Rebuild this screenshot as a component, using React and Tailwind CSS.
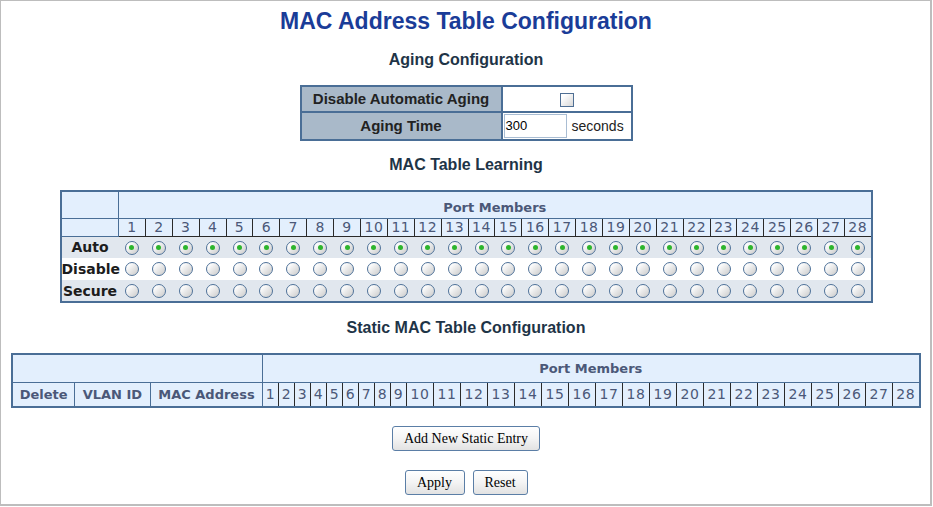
import React from 'react';

const ports = Array.from({ length: 28 }, (_, i) => i + 1);
const modes = [
  { label: 'Auto', bg: 'bg-[#e1e7ee]', checked: true },
  { label: 'Disable', bg: 'bg-white', checked: false },
  { label: 'Secure', bg: 'bg-[#e1e7ee]', checked: false },
];

function Radio({ checked }) {
  return (
    <span className="inline-flex h-[14px] w-[14px] items-center justify-center rounded-full border border-[#4f7299] bg-[linear-gradient(135deg,#ffffff_15%,#d0d0d0_90%)] align-middle">
      {checked ? <span className="h-[5px] w-[5px] rounded-full bg-[#2db52d]" /> : null}
    </span>
  );
}

function Button({ children, className = '' }) {
  return (
    <button
      type="button"
      className={`h-[25px] rounded-[3px] border border-[#5b7ea6] bg-[linear-gradient(180deg,#ffffff_0%,#f4f4f4_50%,#e2e2e2_100%)] font-['Liberation_Serif',serif] text-[14px] leading-none text-black ${className}`}
    >
      {children}
    </button>
  );
}

function SectionTitle({ children, className = '' }) {
  return (
    <h2 className={`h-[20px] text-center font-['Liberation_Sans',Arial,sans-serif] text-[16px] font-bold leading-[20px] text-[#1e3447] ${className}`}>
      {children}
    </h2>
  );
}

export default function App() {
  return (
    <div className="h-[506px] w-[932px] overflow-hidden border-l border-t border-r-2 border-b-2 border-[#bdbdbd] bg-white pl-[1px]">
      <div className="flex flex-col items-center pt-[7px]">
        <h1 className="h-[26px] font-['Liberation_Sans',Arial,sans-serif] text-[23px] font-bold leading-[26px] text-[#1a3c98]">
          MAC Address Table Configuration
        </h1>

        <SectionTitle className="mt-[16px]">Aging Configuration</SectionTitle>

        <table className="mt-[15px] border-collapse border-2 border-[#4a6e96] font-['Liberation_Sans',Arial,sans-serif] text-[15px]">
          <tbody>
            <tr className="h-[26px]">
              <td className="w-[201px] border-2 border-[#4a6e96] bg-[#a9b9c9] text-center font-bold text-[#222]">
                Disable Automatic Aging
              </td>
              <td className="w-[130px] border-2 border-[#4a6e96] text-center">
                <span className="inline-block h-[14px] w-[14px] border border-[#4f6f94] bg-[linear-gradient(135deg,#ffffff_20%,#dcdcdc_90%)] align-middle" />
              </td>
            </tr>
            <tr className="h-[28px]">
              <td className="border-2 border-[#4a6e96] bg-[#a9b9c9] text-center font-bold text-[#222]">Aging Time</td>
              <td className="border-2 border-[#4a6e96] px-[1px]">
                <div className="flex items-center gap-[5px]">
                  <span className="flex h-[24px] w-[63px] items-center border border-[#a9bdd3] px-[1px] text-[13px] text-black">
                    300
                  </span>
                  <span className="text-[14px] text-[#222]">seconds</span>
                </div>
              </td>
            </tr>
          </tbody>
        </table>

        <SectionTitle className="mt-[14px]">MAC Table Learning</SectionTitle>

        <table className="mt-[15px] w-[813px] table-fixed border-collapse border-2 border-[#4a6e96] font-['DejaVu_Sans',Verdana,sans-serif] text-[13px] font-bold">
          <colgroup>
            <col className="w-[58px]" />
            {ports.map((p) => (
              <col key={p} />
            ))}
          </colgroup>
          <tbody>
            <tr className="h-[27px] bg-[#e3effd]">
              <td className="border border-[#4a6e96]" />
              <td colSpan={28} className="border border-[#4a6e96] pt-[6px] text-center text-[#4b5878]">
                Port Members
              </td>
            </tr>
            <tr className="h-[18px] bg-[#e3effd]">
              <td className="border border-[#4a6e96]" />
              {ports.map((p) => (
                <td key={p} className="border-r border-b border-[#2a2a2a] p-0 text-center text-[14px] font-normal leading-[17px] tracking-[0.5px] text-[#4b5878]">
                  {p}
                </td>
              ))}
            </tr>
            {modes.map((mode) => (
              <tr key={mode.label} className={`h-[22px] ${mode.bg}`}>
                <td className="p-0 text-center text-[14px] leading-[20px] text-[#1c1c1c]">{mode.label}</td>
                {ports.map((p) => (
                  <td key={p} className="p-0 text-center leading-none">
                    <Radio checked={mode.checked} />
                  </td>
                ))}
              </tr>
            ))}
          </tbody>
        </table>

        <SectionTitle className="mt-[15px]">Static MAC Table Configuration</SectionTitle>

        <table className="mt-[15px] w-[907px] table-fixed border-collapse border-2 border-[#4a6e96] bg-[#e3effd] font-['DejaVu_Sans',Verdana,sans-serif] text-[13px] font-bold text-[#4b5878]">
          <colgroup>
            <col className="w-[62px]" />
            <col className="w-[76px]" />
            <col className="w-[112px]" />
            {ports.map((p) => (
              <col key={p} className={p < 10 ? 'w-[16px]' : 'w-[27px]'} />
            ))}
          </colgroup>
          <tbody>
            <tr className="h-[28px]">
              <td colSpan={3} className="border border-[#4a6e96]" />
              <td colSpan={28} className="border border-[#4a6e96] text-center">
                Port Members
              </td>
            </tr>
            <tr className="h-[25px]">
              <td className="border border-[#4a6e96] p-0 text-center">Delete</td>
              <td className="border border-[#4a6e96] p-0 text-center">VLAN ID</td>
              <td className="border border-[#4a6e96] p-0 text-center">MAC Address</td>
              {ports.map((p) => (
                <td key={p} className="border-r border-[#2a2a2a] p-0 text-center text-[14px] font-normal tracking-[0.5px]">
                  {p}
                </td>
              ))}
            </tr>
          </tbody>
        </table>

        <Button className="mt-[18px] w-[148px]">Add New Static Entry</Button>

        <div className="mt-[19px] flex gap-[8px]">
          <Button className="w-[60px]">Apply</Button>
          <Button className="w-[55px]">Reset</Button>
        </div>
      </div>
    </div>
  );
}
